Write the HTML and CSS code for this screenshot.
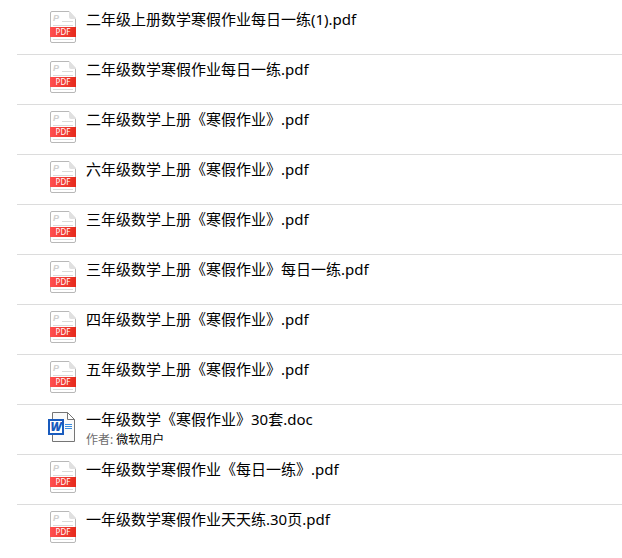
FILE: index.html
```html
<!DOCTYPE html>
<html lang="zh-CN">
<head>
    <meta charset="UTF-8">
    <meta name="viewport" content="width=device-width, initial-scale=1.0">
    <title>寒假作业</title>
    <link rel="stylesheet" href="styles.css">
</head>
<body>
    <!-- the gradient has to stay rendered, the symbols do not -->
    <svg class="gradients" width="0" height="0" aria-hidden="true">
        <linearGradient id="pdf-red" x1="0" y1="0" x2="1" y2="0">
            <stop offset="0" stop-color="#ff4f4f"/>
            <stop offset="1" stop-color="#e62a1c"/>
        </linearGradient>
    </svg>
    <svg class="sprite" aria-hidden="true">
        <symbol id="icon-pdf" viewBox="0 0 28 32">
            <path d="M4 .5H21L27.5 7.5V30Q27.5 31.5 26 31.5H4Q2.5 31.5 2.5 30V2Q2.5 .5 4 .5Z" fill="#fff" stroke="#b8b8b8"/>
            <path d="M21 0V6Q21 8 23 8H28V7Z" fill="#e0e0e0"/>
            <path d="M14 10.5H25M5 14.5H25M5 28.5H25" stroke="#dadada"/>
            <text class="pdf-letter" x="5" y="10">P</text>
            <rect x="2" y="16" width="26" height="10" fill="url(#pdf-red)"/>
            <text class="pdf-label" x="15" y="24" text-anchor="middle">PDF</text>
        </symbol>
        <symbol id="icon-doc" viewBox="0 0 28 32">
            <path d="M4.5 1.5H19.5L26.5 8.5V30.5H4.5Z" fill="#fafafa" stroke="#757575"/>
            <path d="M19.5 1.5V8.5H26.5Z" fill="#fff" stroke="#757575"/>
            <path d="M17 13.5H24M17 15.5H24M17 17.5H24" stroke="#3a8ee0"/>
            <rect x="0" y="8" width="16" height="16" fill="#185abd"/>
            <rect x="2" y="10" width="12" height="12" fill="#fff"/>
            <text class="doc-letter" x="8" y="20" text-anchor="middle">W</text>
        </symbol>
    </svg>

    <ul class="file-list">
        <li class="file">
            <svg class="file-icon"><use href="#icon-pdf"/></svg>
            <div class="file-name">二年级上册数学寒假作业每日一练(1).pdf</div>
        </li>
        <li class="file">
            <svg class="file-icon"><use href="#icon-pdf"/></svg>
            <div class="file-name">二年级数学寒假作业每日一练.pdf</div>
        </li>
        <li class="file">
            <svg class="file-icon"><use href="#icon-pdf"/></svg>
            <div class="file-name">二年级数学上册《寒假作业》.pdf</div>
        </li>
        <li class="file">
            <svg class="file-icon"><use href="#icon-pdf"/></svg>
            <div class="file-name">六年级数学上册《寒假作业》.pdf</div>
        </li>
        <li class="file">
            <svg class="file-icon"><use href="#icon-pdf"/></svg>
            <div class="file-name">三年级数学上册《寒假作业》.pdf</div>
        </li>
        <li class="file">
            <svg class="file-icon"><use href="#icon-pdf"/></svg>
            <div class="file-name">三年级数学上册《寒假作业》每日一练.pdf</div>
        </li>
        <li class="file">
            <svg class="file-icon"><use href="#icon-pdf"/></svg>
            <div class="file-name">四年级数学上册《寒假作业》.pdf</div>
        </li>
        <li class="file">
            <svg class="file-icon"><use href="#icon-pdf"/></svg>
            <div class="file-name">五年级数学上册《寒假作业》.pdf</div>
        </li>
        <li class="file">
            <svg class="file-icon"><use href="#icon-doc"/></svg>
            <div class="file-info">
                <div class="file-name">一年级数学《寒假作业》30套.doc</div>
                <div class="file-author"><span class="author-label">作者:</span> 微软用户</div>
            </div>
        </li>
        <li class="file">
            <svg class="file-icon"><use href="#icon-pdf"/></svg>
            <div class="file-name">一年级数学寒假作业《每日一练》.pdf</div>
        </li>
        <li class="file">
            <svg class="file-icon"><use href="#icon-pdf"/></svg>
            <div class="file-name">一年级数学寒假作业天天练.30页.pdf</div>
        </li>
    </ul>
</body>
</html>
```

FILE: styles.css
```css
body {
    margin: 0;
    background-color: #fff;
    color: #000;
    font-family: "Noto Sans", "Noto Sans CJK SC", sans-serif;
    font-size: 15px;
}

.gradients {
    position: absolute;
}

.sprite {
    display: none;
}

.file-list {
    list-style: none;
    margin: 0;
    padding: 5px 0 0 17px;
}

.file {
    display: flex;
    align-items: flex-start;
    gap: 10px;
    box-sizing: border-box;
    min-height: 50px;
    padding: 4px 0 0 31px;
    border-bottom: 1px solid #dcdcdc;
}

.file:last-child {
    border-bottom: none;
}

.file-icon {
    flex: none;
    width: 28px;
    height: 32px;
    margin-top: 2px;
}

.file-name {
    line-height: 20px;
}

.file-author {
    font-size: 12px;
    line-height: 22px;
}

.author-label {
    color: #6d6d6d;
}

.pdf-letter {
    font: italic bold 9px "Liberation Sans", sans-serif;
    fill: #d0d0d0;
}

.pdf-label {
    font: 8px "Noto Sans", sans-serif;
    fill: #fff;
}

.doc-letter {
    font: italic 800 12px "Open Sans", sans-serif;
    fill: #185abd;
}
```
